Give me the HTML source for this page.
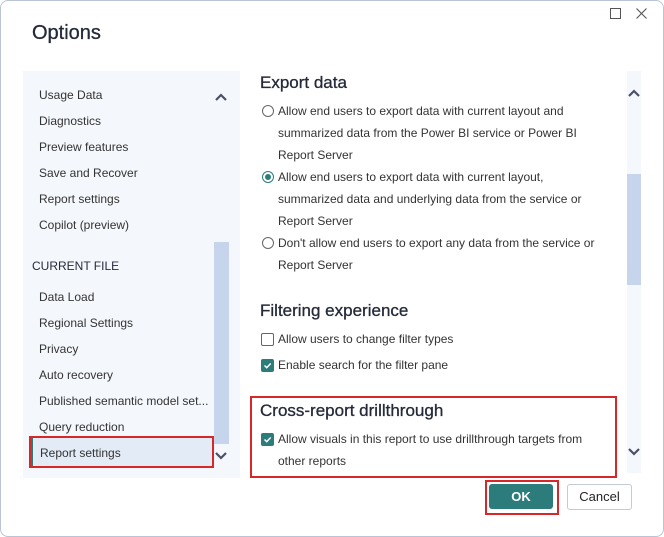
<!DOCTYPE html><html><head><style>
body{margin:0;width:664px;height:537px;background:#fff;font-family:"Liberation Sans",sans-serif;color:#252423;position:relative;overflow:hidden}
.win{position:absolute;left:0;top:0;width:662px;height:535px;border:1px solid #b9c5d6;border-radius:8px;background:#fff}
.a{position:absolute;white-space:nowrap}
.nav{font-size:12px;color:#333}
.t{font-size:12px;color:#333}
h2{position:absolute;margin:0;font-size:17px;font-weight:normal;color:#252a3a;white-space:nowrap;-webkit-text-stroke:0.3px #252a3a}
.rad{position:absolute;width:10px;height:10px;border:1px solid #666;border-radius:50%;background:#fff}
.chk{position:absolute;width:11px;height:11px;border:1px solid #666;border-radius:2px;background:#fff}
.chk.on{background:#2b7c7b;border-color:#2b7c7b}
</style></head><body><div class="win"></div>
<div class="a" style="left:32px;top:22px;font-size:20px;color:#252a3a;-webkit-text-stroke:0.3px #252a3a">Options</div>
<div class="a" style="left:610px;top:8px;width:9px;height:9px;border:1px solid #555"></div>
<svg class="a" style="left:636px;top:8px" width="11" height="11"><path d="M0.5 0.5L10.5 10.5M10.5 0.5L0.5 10.5" stroke="#555" stroke-width="1.1"/></svg>
<div class="a" style="left:23px;top:71px;width:217px;height:407px;background:#f4f7fc"></div>
<div class="a" style="left:214px;top:242px;width:15px;height:202px;background:#c7d5ec"></div>
<svg class="a" style="left:214px;top:92px" width="14" height="10"><path d="M2 8L7 3L12 8" stroke="#4a5068" stroke-width="2.2" fill="none"/></svg>
<svg class="a" style="left:214px;top:451px" width="14" height="10"><path d="M2 2L7 7L12 2" stroke="#4a5068" stroke-width="2.2" fill="none"/></svg>
<div class="a nav" style="left:39px;top:88px">Usage Data</div>
<div class="a nav" style="left:39px;top:114px">Diagnostics</div>
<div class="a nav" style="left:39px;top:140px">Preview features</div>
<div class="a nav" style="left:39px;top:166px">Save and Recover</div>
<div class="a nav" style="left:39px;top:192px">Report settings</div>
<div class="a nav" style="left:39px;top:218px">Copilot (preview)</div>
<div class="a" style="left:32px;top:259px;font-size:12px;color:#252a3a">CURRENT FILE</div>
<div class="a nav" style="left:39px;top:290px">Data Load</div>
<div class="a nav" style="left:39px;top:316px">Regional Settings</div>
<div class="a nav" style="left:39px;top:342px">Privacy</div>
<div class="a nav" style="left:39px;top:368px">Auto recovery</div>
<div class="a nav" style="left:39px;top:394px">Published semantic model set...</div>
<div class="a nav" style="left:39px;top:420px">Query reduction</div>
<div class="a" style="left:30px;top:437px;width:181px;height:29px;background:#e3ebf6;border-left:3px solid #2b7c7b"></div>
<div class="a" style="left:29px;top:436px;width:181px;height:28px;border:2px solid #d62828"></div>
<div class="a nav" style="left:40px;top:446px">Report settings</div>
<div class="a" style="left:627px;top:71px;width:14px;height:402px;background:#f4f7fc"></div>
<div class="a" style="left:627px;top:174px;width:14px;height:111px;background:#c7d5ec"></div>
<svg class="a" style="left:627px;top:88px" width="14" height="10"><path d="M2 8L7 3L12 8" stroke="#4a5068" stroke-width="2.2" fill="none"/></svg>
<svg class="a" style="left:627px;top:447px" width="14" height="10"><path d="M2 2L7 7L12 2" stroke="#4a5068" stroke-width="2.2" fill="none"/></svg>
<h2 style="left:260px;top:73px">Export data</h2>
<div class="rad" style="left:262px;top:105px"></div>
<div class="a t" style="left:278px;top:100px;line-height:22px">Allow end users to export data with current layout and<br>summarized data from the Power BI service or Power BI<br>Report Server</div>
<div class="rad" style="left:262px;top:171px;border-color:#2b7c7b"></div><div class="a" style="left:265px;top:174px;width:6px;height:6px;border-radius:50%;background:#2b7c7b"></div>
<div class="a t" style="left:278px;top:166px;line-height:22px">Allow end users to export data with current layout,<br>summarized data and underlying data from the service or<br>Report Server</div>
<div class="rad" style="left:262px;top:237px"></div>
<div class="a t" style="left:278px;top:232px;line-height:22px">Don't allow end users to export any data from the service or<br>Report Server</div>
<h2 style="left:260px;top:301px">Filtering experience</h2>
<div class="chk" style="left:261px;top:333px"></div>
<div class="a t" style="left:278px;top:332px">Allow users to change filter types</div>
<div class="chk on" style="left:261px;top:359px"></div>
<svg class="a" style="left:262px;top:360px" width="11" height="11"><path d="M2.5 5.5L4.7 7.7L8.7 3.5" stroke="#fff" stroke-width="1.5" fill="none"/></svg>
<div class="a t" style="left:278px;top:358px">Enable search for the filter pane</div>
<div class="a" style="left:250px;top:396px;width:363px;height:78px;border:2px solid #d62828"></div>
<h2 style="left:260px;top:401px">Cross-report drillthrough</h2>
<div class="chk on" style="left:261px;top:433px"></div>
<svg class="a" style="left:262px;top:434px" width="11" height="11"><path d="M2.5 5.5L4.7 7.7L8.7 3.5" stroke="#fff" stroke-width="1.5" fill="none"/></svg>
<div class="a t" style="left:278px;top:428px;line-height:22px">Allow visuals in this report to use drillthrough targets from<br>other reports</div>
<div class="a" style="left:485px;top:480px;width:70px;height:31px;border:2px solid #d62828"></div>
<div class="a" style="left:489px;top:484px;width:64px;height:25px;background:#2b7c7b;border-radius:3px;color:#fff;font-size:13px;font-weight:bold;text-align:center;line-height:25px">OK</div>
<div class="a" style="left:567px;top:484px;width:63px;height:24px;border:1px solid #c5cbd3;border-radius:3px;font-size:13px;text-align:center;line-height:24px;color:#252423">Cancel</div>
</body></html>
